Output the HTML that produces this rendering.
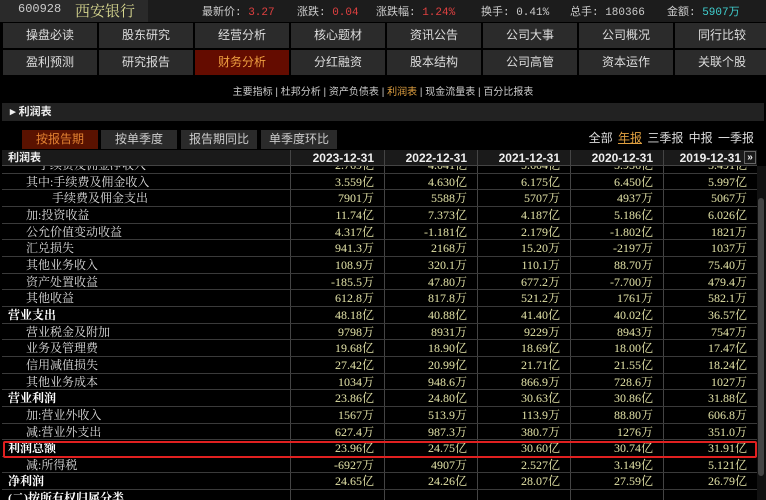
<!DOCTYPE html>
<html><head><meta charset="utf-8"><style>
*{margin:0;padding:0;box-sizing:border-box}
body{width:766px;height:500px;background:#000;overflow:hidden;position:relative;font-family:"Liberation Sans","Noto Sans CJK SC",sans-serif;color:#ddd}
.abs{position:absolute}
#top{left:0;top:0;width:766px;height:22px;background:#1c1c1c}
#top .code{left:0;top:0;width:148px;height:22px;background:#2a2a2a}
.t{position:absolute;top:3px;font-size:11px;color:#ccc;white-space:nowrap;font-family:"Liberation Mono","Noto Sans CJK SC",monospace}
.nav{position:absolute;height:25px;width:94px;background:#2b2b2b;color:#ddd;font-size:12px;text-align:center;line-height:25px}
.nav.on{background:#640c00;color:#f0a040}
#sub{left:0;top:83px;width:766px;text-align:center;font-size:10px;color:#ccc}
#sec{left:2px;top:103px;width:762px;height:18px;background:#222;font-size:11px;font-weight:bold;line-height:18px;padding-left:8px;color:#eee}
.tab{position:absolute;top:130px;height:19px;width:76px;background:#2a2a2a;color:#ccc;font-size:12px;text-align:center;line-height:19px}
.tab.on{background:#5a1200;color:#e08030}
#per{right:12px;top:129px;font-size:12px;color:#ddd;word-spacing:2px}
#hdr{left:2px;top:150px;width:755px;height:16px;background:#1a1a1a;border-bottom:1px solid #444}
.c{position:absolute;top:0;height:100%;text-align:right;padding-right:10px;border-left:1px solid #444;font-size:12px}
#body{left:2px;top:166px;width:755px;height:334px;overflow:hidden}
#rows{position:absolute;left:0;top:-9px;width:755px}
.r{position:relative;height:16.67px;border-bottom:1px solid #3a3a3a;line-height:16px;font-size:12px;font-family:"Liberation Serif","Noto Serif CJK SC",serif}
.r .l{position:absolute;left:0;width:288px;color:#ddd;white-space:nowrap}
.r .c{color:#e4e4a8}
.b .l{font-weight:bold;color:#fff;padding-left:6px}
</style></head><body>
<div id="top" class="abs"><div class="code abs"></div>
<span class="t" style="left:18px;color:#ccc;top:2px;font-size:12px">600928</span>
<span class="t" style="left:75px;top:0;font-size:15px;color:#d8d890;font-family:'Liberation Serif','Noto Serif CJK SC',serif">西安银行</span>
<span class="t" style="left:202px">最新价: <span style="color:#e04040">3.27</span></span>
<span class="t" style="left:297px">涨跌: <span style="color:#e04040">0.04</span></span>
<span class="t" style="left:376px">涨跌幅: <span style="color:#e04040">1.24%</span></span>
<span class="t" style="left:481px">换手: 0.41%</span>
<span class="t" style="left:570px">总手: 180366</span>
<span class="t" style="left:667px">金额: <span style="color:#40d0d0">5907万</span></span>
</div>
<div class="nav" style="left:3px;top:23px">操盘必读</div><div class="nav" style="left:99px;top:23px">股东研究</div><div class="nav" style="left:195px;top:23px">经营分析</div><div class="nav" style="left:291px;top:23px">核心题材</div><div class="nav" style="left:387px;top:23px">资讯公告</div><div class="nav" style="left:483px;top:23px">公司大事</div><div class="nav" style="left:579px;top:23px">公司概况</div><div class="nav" style="left:675px;top:23px">同行比较</div>
<div class="nav" style="left:3px;top:50px">盈利预测</div><div class="nav" style="left:99px;top:50px">研究报告</div><div class="nav on" style="left:195px;top:50px">财务分析</div><div class="nav" style="left:291px;top:50px">分红融资</div><div class="nav" style="left:387px;top:50px">股本结构</div><div class="nav" style="left:483px;top:50px">公司高管</div><div class="nav" style="left:579px;top:50px">资本运作</div><div class="nav" style="left:675px;top:50px">关联个股</div>
<div id="sub" class="abs">主要指标 | 杜邦分析 | 资产负债表 | <span style="color:#e0a040">利润表</span> | 现金流量表 | 百分比报表</div>
<div id="sec" class="abs">▸ 利润表</div>
<div class="tab on" style="left:22px">按报告期</div><div class="tab" style="left:101px">按单季度</div><div class="tab" style="left:181px">报告期同比</div><div class="tab" style="left:261px">单季度环比</div>
<div id="per" class="abs">全部 <span style="color:#e0a040;text-decoration:underline">年报</span> 三季报 中报 一季报</div>
<div id="hdr" class="abs" style="font-size:11px;font-weight:bold;color:#eee;line-height:16px">
<span style="position:absolute;left:6px">利润表</span>
<div class="c" style="left:288px;width:94px">2023-12-31</div><div class="c" style="left:382px;width:93px">2022-12-31</div><div class="c" style="left:475px;width:93px">2021-12-31</div><div class="c" style="left:568px;width:93px">2020-12-31</div><div class="c" style="left:661px;width:94px;padding-right:16px">2019-12-31</div>
<span style="position:absolute;right:1px;top:1px;width:12px;height:13px;border:1px solid #666;font-size:10px;line-height:11px;text-align:center">»</span>
</div>
<div id="body" class="abs"><div id="rows"></div></div>
<div class="abs" style="left:757px;top:166px;width:9px;height:334px;background:#111"></div>
<div class="abs" style="left:758px;top:198px;width:6px;height:278px;background:#444;border-radius:3px"></div>
<div class="abs" style="left:3px;top:441px;width:754px;height:17px;border:2px solid #e02020;border-radius:2px"></div>
<script>
var d=[["　手续费及佣金净收入",0,["2.769亿","4.041亿","5.604亿","5.956亿","5.491亿"]],
["其中:手续费及佣金收入",1,["3.559亿","4.630亿","6.175亿","6.450亿","5.997亿"]],
["手续费及佣金支出",2,["7901万","5588万","5707万","4937万","5067万"]],
["加:投资收益",1,["11.74亿","7.373亿","4.187亿","5.186亿","6.026亿"]],
["公允价值变动收益",1,["4.317亿","-1.181亿","2.179亿","-1.802亿","1821万"]],
["汇兑损失",1,["941.3万","2168万","15.20万","-2197万","1037万"]],
["其他业务收入",1,["108.9万","320.1万","110.1万","88.70万","75.40万"]],
["资产处置收益",1,["-185.5万","47.80万","677.2万","-7.700万","479.4万"]],
["其他收益",1,["612.8万","817.8万","521.2万","1761万","582.1万"]],
["营业支出",-1,["48.18亿","40.88亿","41.40亿","40.02亿","36.57亿"]],
["营业税金及附加",1,["9798万","8931万","9229万","8943万","7547万"]],
["业务及管理费",1,["19.68亿","18.90亿","18.69亿","18.00亿","17.47亿"]],
["信用减值损失",1,["27.42亿","20.99亿","21.71亿","21.55亿","18.24亿"]],
["其他业务成本",1,["1034万","948.6万","866.9万","728.6万","1027万"]],
["营业利润",-1,["23.86亿","24.80亿","30.63亿","30.86亿","31.88亿"]],
["加:营业外收入",1,["1567万","513.9万","113.9万","88.80万","606.8万"]],
["减:营业外支出",1,["627.4万","987.3万","380.7万","1276万","351.0万"]],
["利润总额",-1,["23.96亿","24.75亿","30.60亿","30.74亿","31.91亿"]],
["减:所得税",1,["-6927万","4907万","2.527亿","3.149亿","5.121亿"]],
["净利润",-1,["24.65亿","24.26亿","28.07亿","27.59亿","26.79亿"]],
["(二)按所有权归属分类",-1,["","","","",""]]];
var L=[288,382,475,568,661],W=[94,93,93,93,94],h="";
d.forEach(function(x){var pad=x[1]<0?6:(x[1]==2?50:24);
h+='<div class="r'+(x[1]<0?' b':'')+'"><span class="l" style="padding-left:'+pad+'px">'+x[0]+'</span>';
x[2].forEach(function(v,i){h+='<div class="c" style="left:'+L[i]+'px;width:'+W[i]+'px">'+v+'</div>'});h+='</div>'});
document.getElementById('rows').innerHTML=h;
</script>
</body></html>
